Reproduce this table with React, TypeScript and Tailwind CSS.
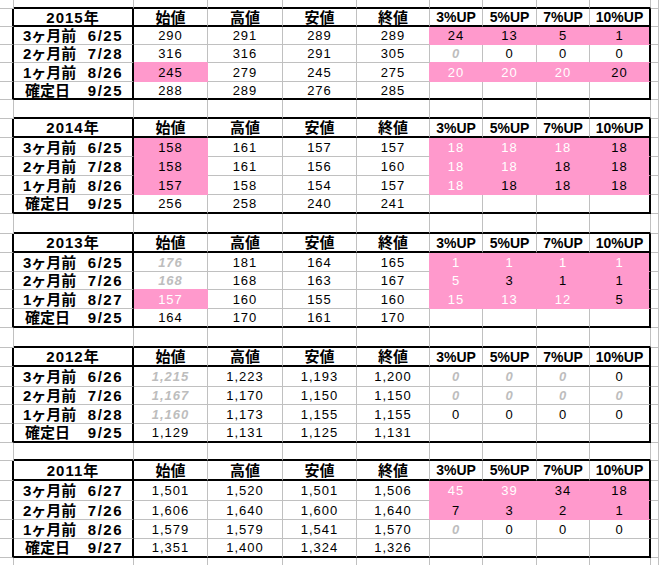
import { FC } from 'react';

// 罫線・塗り
const GRID = 'border-[#c0c0c0]';
const COLS = 'grid grid-cols-[14px_120px_74px_75px_74px_73px_53px_54px_53px_61px_1fr]';

const H: Record<number, string> = {
  9: 'h-[9px]',
  10: 'h-[10px]',
  18: 'h-[18px]',
  19: 'h-[19px]',
  20: 'h-[20px]',
};

type Block = {
  year: string;
  heights: number[];
  gap: number;
  rows: [string, string, string[]][];
};

const blocks: Block[] = [
  {
    year: '2015年',
    heights: [18, 18, 18, 19, 18],
    gap: 19,
    rows: [
      ['3ヶ月前', '6/25', ['290', '291', '289', '289', '*24', '*13', '*5', '*1']],
      ['2ヶ月前', '7/28', ['316', '316', '291', '305', '!0', '0', '0', '0']],
      ['1ヶ月前', '8/26', ['*245', '279', '245', '275', '*~20', '*~20', '*~20', '*20']],
      ['確定日', '9/25', ['288', '289', '276', '285', '', '', '', '']],
    ],
  },
  {
    year: '2014年',
    heights: [19, 19, 19, 19, 19],
    gap: 20,
    rows: [
      ['3ヶ月前', '6/25', ['*158', '161', '157', '157', '*~18', '*~18', '*~18', '*18']],
      ['2ヶ月前', '7/28', ['*158', '161', '156', '160', '*~18', '*~18', '*18', '*18']],
      ['1ヶ月前', '8/26', ['*157', '158', '154', '157', '*~18', '*18', '*18', '*18']],
      ['確定日', '9/25', ['256', '258', '240', '241', '', '', '', '']],
    ],
  },
  {
    year: '2013年',
    heights: [19, 19, 18, 19, 19],
    gap: 20,
    rows: [
      ['3ヶ月前', '6/25', ['!176', '181', '164', '165', '*~1', '*~1', '*~1', '*~1']],
      ['2ヶ月前', '7/26', ['!168', '168', '163', '167', '*~5', '*3', '*1', '*1']],
      ['1ヶ月前', '8/27', ['*~157', '160', '155', '160', '*~15', '*~13', '*~12', '*5']],
      ['確定日', '9/25', ['164', '170', '161', '170', '', '', '', '']],
    ],
  },
  {
    year: '2012年',
    heights: [19, 20, 18, 19, 19],
    gap: 18,
    rows: [
      ['3ヶ月前', '6/26', ['!1,215', '1,223', '1,193', '1,200', '!0', '!0', '!0', '0']],
      ['2ヶ月前', '7/26', ['!1,167', '1,170', '1,150', '1,150', '!0', '!0', '!0', '!0']],
      ['1ヶ月前', '8/28', ['!1,160', '1,173', '1,155', '1,155', '0', '0', '0', '0']],
      ['確定日', '9/25', ['1,129', '1,131', '1,125', '1,131', '', '', '', '']],
    ],
  },
  {
    year: '2011年',
    heights: [20, 20, 19, 19, 19],
    gap: 10,
    rows: [
      ['3ヶ月前', '6/27', ['1,501', '1,520', '1,501', '1,506', '*~45', '*~39', '*34', '*18']],
      ['2ヶ月前', '7/26', ['1,606', '1,640', '1,600', '1,640', '*7', '*3', '*2', '*1']],
      ['1ヶ月前', '8/26', ['1,579', '1,579', '1,541', '1,570', '!0', '0', '0', '0']],
      ['確定日', '9/27', ['1,351', '1,400', '1,324', '1,326', '', '', '', '']],
    ],
  },
];

const heads = ['始値', '高値', '安値', '終値', '3%UP', '5%UP', '7%UP', '10%UP'];

const pink = (s?: string) => !!s && s.includes('*');

// 空白行（上下の表の間）
const GapRow: FC<{ h: number; topOfTable: boolean }> = ({ h, topOfTable }) => (
  <div className={`${COLS} ${H[h]}`}>
    {Array.from({ length: 11 }).map((_, c) => (
      <div
        key={c}
        className={`border-r ${GRID} ${
          topOfTable && c >= 1 && c <= 9 ? 'border-b-2 border-b-black' : 'border-b border-b-[#c0c0c0]'
        }`}
      />
    ))}
  </div>
);

const HeaderRow: FC<{ year: string; h: number }> = ({ year, h }) => (
  <div className={`${COLS} ${H[h]}`}>
    <div className="border-r-2 border-r-black border-b border-b-[#c0c0c0]" />
    <div className="flex items-center justify-center border-r-2 border-r-black border-b-2 border-b-black font-bold text-[15px] tracking-[1px]">
      {year}
    </div>
    {heads.map((t, i) => (
      <div
        key={t}
        className={`flex items-center justify-center border-b-2 border-b-black font-bold ${
          i === 7 ? 'border-r-2 border-r-black' : 'border-r border-r-[#c0c0c0]'
        } ${i < 4 ? 'text-[15px]' : 'text-[14px]'}`}
      >
        {t}
      </div>
    ))}
    <div className="border-r border-r-[#c0c0c0] border-b border-b-[#c0c0c0]" />
  </div>
);

const DataRow: FC<{
  label: string;
  date: string;
  cells: string[];
  below?: string[];
  last: boolean;
  h: number;
}> = ({ label, date, cells, below, last, h }) => (
  <div className={`${COLS} ${H[h]}`}>
    <div className="border-r-2 border-r-black border-b border-b-[#c0c0c0]" />
    <div
      className={`flex items-center justify-between pr-[9px] border-r-2 border-r-black font-bold text-[15px] ${
        label === '確定日' ? 'pl-[11px]' : 'pl-[9px]'
      } ${last ? 'border-b-2 border-b-black' : 'border-b border-b-[#c0c0c0]'}`}
    >
      <span>{label}</span>
      <span className="tracking-[1.5px]">{date}</span>
    </div>
    {cells.map((s, i) => {
      const fill = pink(s);
      const text = s.replace(/[*~!]/g, '');
      const right =
        i === 7
          ? 'border-r-2 border-r-black'
          : fill || pink(cells[i + 1])
          ? 'border-r border-r-[#ff99cc]'
          : 'border-r border-r-[#c0c0c0]';
      const bottom = last
        ? 'border-b-2 border-b-black'
        : fill || pink(below?.[i])
        ? 'border-b border-b-[#ff99cc]'
        : 'border-b border-b-[#c0c0c0]';
      const tone = s.includes('!')
        ? 'text-[#bdbdbd] italic font-bold'
        : s.includes('~')
        ? 'text-white'
        : 'text-black';
      return (
        <div
          key={i}
          className={`flex items-center justify-center text-[13px] tracking-[1px] ${right} ${bottom} ${tone} ${
            fill ? 'bg-[#ff99cc]' : ''
          }`}
        >
          {text}
        </div>
      );
    })}
    <div className="border-r border-r-[#c0c0c0] border-b border-b-[#c0c0c0]" />
  </div>
);

export default function App() {
  return (
    <div className="w-[659px] h-[565px] overflow-hidden bg-white text-black font-['Liberation_Sans','Noto_Sans_CJK_JP',sans-serif] leading-none">
      <GapRow h={9} topOfTable />
      {blocks.map((b, bi) => (
        <div key={b.year}>
          <HeaderRow year={b.year} h={b.heights[0]} />
          {b.rows.map(([label, date, cells], ri) => (
            <DataRow
              key={label}
              label={label}
              date={date}
              cells={cells}
              below={b.rows[ri + 1]?.[2]}
              last={ri === 3}
              h={b.heights[ri + 1]}
            />
          ))}
          <GapRow h={b.gap} topOfTable={bi < blocks.length - 1} />
        </div>
      ))}
    </div>
  );
}
